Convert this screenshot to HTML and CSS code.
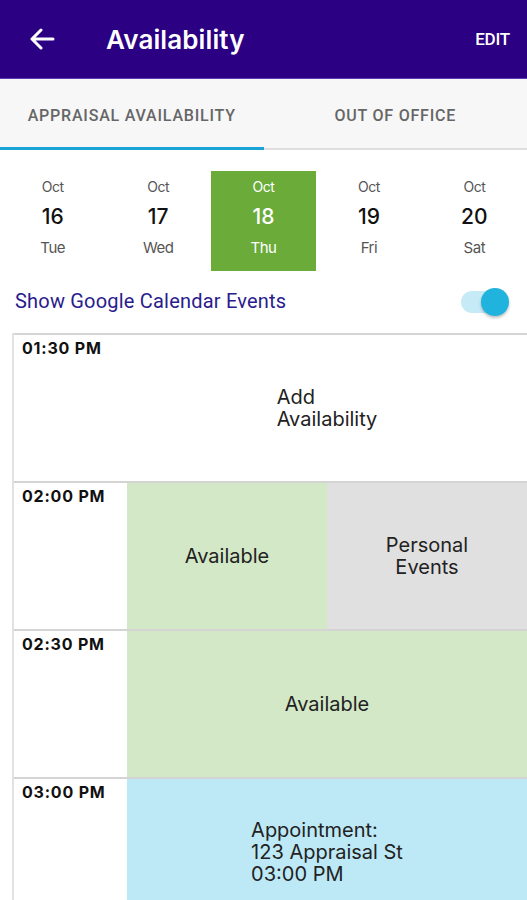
FILE: index.html
```html
<!DOCTYPE html>
<html>
<head>
    <title>Availability</title>
    <link rel="stylesheet" href="styles.css">
</head>
<body>
    <header class="app-bar">
        <svg class="back" width="26" height="22" viewBox="0 0 26 22">
            <path d="M24 11H4M12 2L3 11l9 9" fill="none" stroke="#fff" stroke-width="3" stroke-linecap="round" stroke-linejoin="round"/>
        </svg>
        <h1 class="title">Availability</h1>
        <span class="edit">EDIT</span>
    </header>

    <nav class="tabs">
        <div class="tab active">APPRAISAL AVAILABILITY</div>
        <div class="tab">OUT OF OFFICE</div>
    </nav>

    <div class="dates">
        <div class="day">
            <span class="month">Oct</span>
            <span class="num">16</span>
            <span class="dow">Tue</span>
        </div>
        <div class="day">
            <span class="month">Oct</span>
            <span class="num">17</span>
            <span class="dow">Wed</span>
        </div>
        <div class="day selected">
            <span class="month">Oct</span>
            <span class="num">18</span>
            <span class="dow">Thu</span>
        </div>
        <div class="day">
            <span class="month">Oct</span>
            <span class="num">19</span>
            <span class="dow">Fri</span>
        </div>
        <div class="day">
            <span class="month">Oct</span>
            <span class="num">20</span>
            <span class="dow">Sat</span>
        </div>
    </div>

    <div class="google-row">
        <span class="google-label">Show Google Calendar Events</span>
        <div class="switch"><div class="thumb"></div></div>
    </div>

    <div class="calendar">
        <div class="slot">
            <div class="time">01:30 PM</div>
            <div class="cell empty"><span class="block">Add<br>Availability</span></div>
        </div>
        <div class="slot">
            <div class="time">02:00 PM</div>
            <div class="cell available">Available</div>
            <div class="cell personal"><span class="centered">Personal<br>Events</span></div>
        </div>
        <div class="slot">
            <div class="time">02:30 PM</div>
            <div class="cell available">Available</div>
        </div>
        <div class="slot">
            <div class="time">03:00 PM</div>
            <div class="cell appointment"><span class="block">Appointment:<br>123 Appraisal St<br>03:00 PM</span></div>
        </div>
    </div>
</body>
</html>
```

FILE: styles.css
```css
body {
    margin: 0;
    background-color: #ffffff;
    font-family: "Inter", "DejaVu Sans", sans-serif;
    color: #1a1a1a;
    overflow: hidden;
}
.app-bar {
    height: 78px;
    background-color: #2b0082;
    border-bottom: 1px solid #5a3db0;
    display: flex;
    align-items: center;
    padding: 0 17px 0 29px;
    color: #ffffff;
}
.back {
    margin-right: 51px;
}
.title {
    flex: 1;
    margin: 0;
    font-size: 26px;
    font-weight: 600;
    letter-spacing: 0.1px;
}
.edit {
    font-family: "Roboto", sans-serif;
    font-size: 17px;
    font-weight: 500;
    letter-spacing: -0.2px;
}
.tabs {
    display: flex;
    height: 71px;
    background-color: #f7f7f7;
}
.tab {
    flex: 1;
    display: flex;
    align-items: center;
    justify-content: center;
    font-family: "Roboto", sans-serif;
    font-size: 16px;
    font-weight: 500;
    color: #666666;
    letter-spacing: 0.8px;
    border-bottom: 2px solid #dedede;
    box-sizing: border-box;
    padding-top: 4px;
}
.tab.active {
    border-bottom: 3px solid #1aa3d6;
}
.dates {
    display: flex;
    padding-top: 21px;
}
.day {
    flex: 1;
    height: 100px;
    display: flex;
    flex-direction: column;
    align-items: center;
    padding-top: 7px;
    box-sizing: border-box;
    color: #555555;
}
.day.selected {
    background-color: #6aab3a;
    color: #ffffff;
}
.month {
    font-size: 14px;
    line-height: 18px;
    letter-spacing: -0.5px;
}
.num {
    font-size: 21px;
    font-weight: 500;
    line-height: 30px;
    margin-top: 6px;
    color: #111111;
}
.selected .num {
    color: #ffffff;
}
.dow {
    font-size: 15px;
    line-height: 30px;
    margin-top: 1px;
    letter-spacing: -0.5px;
}
.google-row {
    height: 62px;
    display: flex;
    align-items: center;
    justify-content: space-between;
    padding: 0 19px 0 15px;
}
.google-label {
    font-family: "Roboto", sans-serif;
    font-size: 20px;
    letter-spacing: 0.2px;
    color: #2a1c8c;
    margin-top: -3px;
}
.switch {
    position: relative;
    width: 34px;
    height: 22px;
    border-radius: 11px;
    background-color: #c6ebf7;
    margin-right: 13px;
}
.thumb {
    position: absolute;
    right: -14px;
    top: -3px;
    width: 28px;
    height: 28px;
    border-radius: 50%;
    background-color: #1fb3dd;
    box-shadow: 0 2px 3px rgba(0, 0, 0, 0.25);
}
.calendar {
    margin-left: 12px;
    border-left: 2px solid #e2e2e2;
}
.slot {
    display: flex;
    height: 148px;
    border-top: 2px solid #d4d4d4;
    box-sizing: border-box;
}
.time {
    width: 113px;
    flex: none;
    padding: 3px 0 0 8px;
    box-sizing: border-box;
    font-size: 16px;
    font-weight: 700;
    letter-spacing: 0.8px;
    color: #111111;
}
.cell {
    flex: 1;
    display: flex;
    align-items: center;
    justify-content: center;
    font-size: 20px;
    line-height: 22px;
    color: #222222;
}
.cell.available {
    background-color: #d3e8c6;
}
.cell.personal {
    background-color: #e0e0e0;
}
.cell.appointment {
    background-color: #bde9f6;
    height: 146px;
}
.block {
    text-align: left;
}
.centered {
    text-align: center;
}
```
